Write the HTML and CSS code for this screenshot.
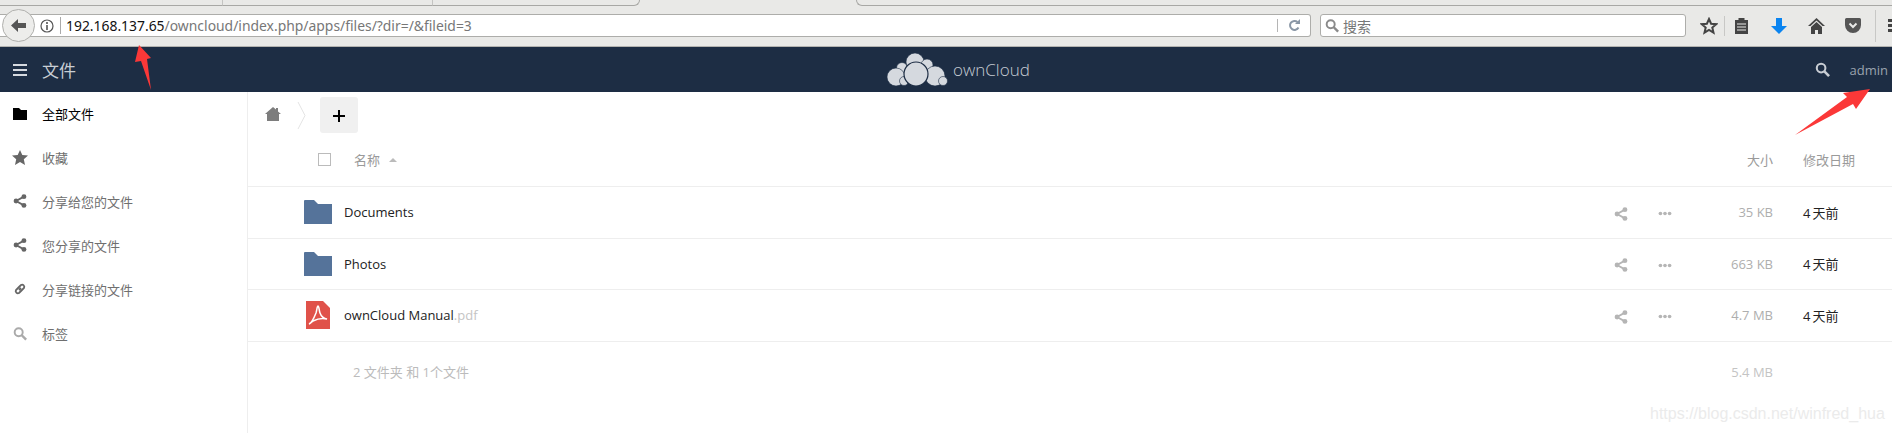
FILE: index.html
```html
<!DOCTYPE html>
<html lang="zh-CN">
<head>
    <meta charset="UTF-8">
    <title>文件 - ownCloud</title>
    <link rel="stylesheet" href="styles.css">
</head>
<body>

    <svg class="defs" width="0" height="0">
        <symbol id="i-share" viewBox="0 0 16 16">
            <path d="M12.5 3 3.5 8l9 5" fill="none" stroke="currentColor" stroke-width="2"/>
            <circle cx="12.5" cy="3" r="2.8" fill="currentColor"/>
            <circle cx="3.5" cy="8" r="2.8" fill="currentColor"/>
            <circle cx="12.5" cy="13" r="2.8" fill="currentColor"/>
        </symbol>
        <symbol id="i-dots" viewBox="0 0 16 6">
            <circle cx="2.5" cy="3" r="2.2" fill="currentColor"/>
            <circle cx="8" cy="3" r="2.2" fill="currentColor"/>
            <circle cx="13.5" cy="3" r="2.2" fill="currentColor"/>
        </symbol>
        <symbol id="i-folder" viewBox="0 0 28 24">
            <path d="M0 1a1 1 0 0 1 1-1h9l4 4h14v20H0z" fill="#55739a"/>
        </symbol>
        <symbol id="i-search" viewBox="0 0 16 16">
            <circle cx="6.5" cy="6.5" r="4.6" fill="none" stroke="currentColor" stroke-width="2.2"/>
            <path d="m10 10 5 5" stroke="currentColor" stroke-width="2.8"/>
        </symbol>
    </svg>

    <div class="tabstrip">
        <div class="tab tab-first"></div>
        <div class="tab tab-second"></div>
        <div class="tab tab-third"></div>
        <div class="tab-active"></div>
        <div class="tab tab-rest"></div>
    </div>

    <div class="toolbar">
        <div class="urlbar">
            <div class="backbtn">
                <svg width="15" height="13" viewBox="0 0 15 13"><path d="M7 0 0 6.500 7 13V9h8V4H7z" fill="#555"/></svg>
            </div>
            <svg class="info" width="14" height="14" viewBox="0 0 14 14">
                <circle cx="7" cy="7" r="6" fill="none" stroke="#555" stroke-width="1.2"/>
                <path d="M7 6v5M7 3v2" stroke="#555" stroke-width="1.6"/>
            </svg>
            <span class="url"><b>192.168.137.65</b>/owncloud/index.php/apps/files/?dir=/&amp;fileid=3</span>
            <svg class="reload" width="13" height="13" viewBox="0 0 13 13">
                <path d="M10.5 8.5A4.5 4.5 0 1 1 9.5 3" fill="none" stroke="#8a97a6" stroke-width="2"/>
                <path d="M7 5h5V0z" fill="#8a97a6"/>
            </svg>
        </div>
        <div class="searchbar">
            <svg class="searchbar-icon" width="14" height="15"><use href="#i-search"/></svg>
            <span>搜索</span>
        </div>
        <div class="tools">
            <svg class="tool-star" width="18" height="18" viewBox="0 0 18 18">
                <path d="m9 2 2.100 4.700 5.100.5-3.900 3.400 1.200 5L9 13l-4.500 2.600 1.200-5-3.900-3.400 5.100-.5z" fill="none" stroke="#444" stroke-width="2"/>
            </svg>
            <i class="tool-sep"></i>
            <svg class="tool-clip" width="15" height="17" viewBox="0 0 15 17">
                <path d="M1 3h3.500V1h6v2H14v14H1z" fill="#444"/>
                <path d="M3 7h9M3 10h9M3 13h9" stroke="#e9e9e7" stroke-width="1.2"/>
            </svg>
            <svg class="tool-down" width="16" height="16" viewBox="0 0 16 16">
                <path d="M5 0h6v8h5l-8 8-8-8h5z" fill="#0a84f0"/>
            </svg>
            <svg class="tool-home" width="17" height="16" viewBox="0 0 17 16">
                <path d="M8.500 0 0 8h2.500L8.500 2.500 14.500 8H17z" fill="#444"/>
                <path d="M8.500 4 3 9v7h4v-4h3v4h4V9z" fill="#444"/>
            </svg>
            <svg class="tool-pocket" width="16" height="15" viewBox="0 0 16 15">
                <path d="M0 1.500A1.500 1.500 0 0 1 1.500 0h13A1.500 1.500 0 0 1 16 1.500V7a8 8 0 0 1-16 0z" fill="#555"/>
                <path d="m4.500 5.500 3.500 3.500 3.500-3.500" fill="none" stroke="#e9e9e7" stroke-width="2"/>
            </svg>
            <i class="tool-sep tool-sep-last"></i>
            <div class="tool-menu"><i></i><i></i><i></i></div>
        </div>
    </div>

    <header class="topbar">
        <div class="topbar-left">
            <div class="burger"><i></i><i></i><i></i></div>
            <span class="app-name">文件</span>
        </div>
        <div class="logo">
            <svg width="62" height="33" viewBox="887 53 62 33">
                <g fill="#d5d9df" stroke="#1d2d44" stroke-width=".6">
                    <circle cx="902" cy="68" r="5.500"/>
                    <circle cx="915" cy="62" r="9"/>
                    <circle cx="927" cy="65" r="6"/>
                    <circle cx="896" cy="77" r="9"/>
                    <circle cx="935" cy="76" r="10"/>
                    <circle cx="943" cy="81" r="4.500"/>
                    <circle cx="904" cy="81" r="4.500"/>
                    <circle cx="916" cy="74" r="12" stroke-width="1.200"/>
                </g>
            </svg>
            <span>ownCloud</span>
        </div>
        <div class="topbar-right">
            <svg class="top-search" width="15" height="15"><use href="#i-search"/></svg>
            <span class="user">admin</span>
        </div>
    </header>

    <div class="content">
        <nav class="sidebar">
            <a class="nav-item active">
                <svg class="nav-icon" width="14" height="12" viewBox="0 0 14 12"><path d="M0 0h6l2 2h6v10H0z" fill="#000"/></svg>
                全部文件
            </a>
            <a class="nav-item">
                <svg class="nav-icon nav-star" width="16" height="15" viewBox="0 0 16 15"><path d="m8 0 2.300 5 5.700.6-4.200 3.700 1.200 5.700L8 12l-5 3 1.200-5.700L0 5.600 5.700 5z" fill="#666"/></svg>
                收藏
            </a>
            <a class="nav-item">
                <svg class="nav-icon" width="14" height="14"><use href="#i-share"/></svg>
                分享给您的文件
            </a>
            <a class="nav-item">
                <svg class="nav-icon" width="14" height="14"><use href="#i-share"/></svg>
                您分享的文件
            </a>
            <a class="nav-item">
                <svg class="nav-icon" width="14" height="14" viewBox="0 0 14 14">
                    <path d="M6 8 8 6M5.500 5.500 8 3a2.200 2.200 0 0 1 3 3L8.500 8.500M8.500 8.500 6 11a2.200 2.200 0 0 1-3-3l2.500-2.500" fill="none" stroke="#666" stroke-width="1.800"/>
                </svg>
                分享链接的文件
            </a>
            <a class="nav-item nav-tags">
                <svg class="nav-icon" width="14" height="15"><use href="#i-search"/></svg>
                标签
            </a>
        </nav>

        <main class="files">
            <div class="controls">
                <svg class="crumb-home" width="16" height="14" viewBox="0 0 16 14">
                    <path d="M8 0 0 7h2v7h12V7h2l-3-2.600V1h-2v1.600z" fill="#7d7d7d"/>
                </svg>
                <svg class="crumb-sep" width="9" height="27" viewBox="0 0 9 27">
                    <path d="m1 0 7 13.500L1 27" fill="none" stroke="#e4e4e4"/>
                </svg>
                <button class="add-btn">
                    <svg width="14" height="14" viewBox="0 0 14 14"><path d="M7 1v12M1 7h12" stroke="#000" stroke-width="2"/></svg>
                </button>
            </div>

            <div class="file-head">
                <span class="check"></span>
                <span class="head-name">名称</span>
                <i class="sort-arrow"></i>
                <span class="head-size">大小</span>
                <span class="head-date">修改日期</span>
            </div>

            <div class="file-row">
                <svg class="file-icon" width="28" height="24"><use href="#i-folder"/></svg>
                <span class="file-name">Documents</span>
                <svg class="act-share" width="14" height="14"><use href="#i-share"/></svg>
                <svg class="act-dots" width="14" height="5"><use href="#i-dots"/></svg>
                <span class="file-size">35 KB</span>
                <span class="file-date">4&thinsp;天前</span>
            </div>
            <div class="file-row">
                <svg class="file-icon" width="28" height="24"><use href="#i-folder"/></svg>
                <span class="file-name">Photos</span>
                <svg class="act-share" width="14" height="14"><use href="#i-share"/></svg>
                <svg class="act-dots" width="14" height="5"><use href="#i-dots"/></svg>
                <span class="file-size">663 KB</span>
                <span class="file-date">4&thinsp;天前</span>
            </div>
            <div class="file-row">
                <svg class="file-icon pdf-icon" width="24" height="28" viewBox="0 0 24 28">
                    <path d="M0 0h17l7 7v21H0z" fill="#e0524a"/>
                    <path d="M3 23c3-1 5-6 7-11 1-3 1-7 2-7s1 4 2 7c1 3 4 6 7 6-4-1-10 0-14 2-2 1-3 3-4 3z" fill="none" stroke="#fff" stroke-width="1.500"/>
                </svg>
                <span class="file-name">ownCloud Manual<span class="file-ext">.pdf</span></span>
                <svg class="act-share" width="14" height="14"><use href="#i-share"/></svg>
                <svg class="act-dots" width="14" height="5"><use href="#i-dots"/></svg>
                <span class="file-size">4.7 MB</span>
                <span class="file-date">4&thinsp;天前</span>
            </div>

            <div class="file-summary">
                <span class="summary-text">2 文件夹 和 1个文件</span>
                <span class="file-size">5.4 MB</span>
            </div>
        </main>
    </div>

    <span class="watermark">https://blog.csdn.net/winfred_hua</span>

    <svg class="arrows" width="1892" height="433">
        <polygon points="139,45 151,58 147,59 151,90 141,61 135,62" fill="#fb3838"/>
        <polygon points="1870,89 1856,109 1853,104 1795,135 1847,97 1843,93" fill="#fb3838"/>
    </svg>

</body>
</html>
```

FILE: styles.css
```css
* {
    box-sizing: border-box;
}

html, body {
    margin: 0;
    padding: 0;
}

body {
    position: relative;
    display: flex;
    flex-direction: column;
    height: 433px;
    overflow: hidden;
    background: #fff;
    font-family: 'Open Sans', 'Noto Sans CJK SC', sans-serif;
    font-size: 13px;
    color: #555;
}

.defs {
    position: absolute;
}

svg {
    display: block;
    flex: none;
}

/* browser chrome */
.tabstrip {
    display: flex;
    height: 6px;
    background: #e9e9e7;
}

.tab {
    border-bottom: 1px solid #a8a8a5;
    border-right: 1px solid #c4c4c2;
}

.tab-first {
    width: 223px;
}

.tab-second {
    width: 210px;
}

.tab-third {
    width: 207px;
    border-bottom-right-radius: 6px;
    border-right: 1px solid #a8a8a5;
}

.tab-active {
    width: 216px;
}

.tab-rest {
    flex: 1;
    border-right: none;
    border-left: 1px solid #a8a8a5;
    border-bottom-left-radius: 6px;
}

.toolbar {
    display: flex;
    align-items: center;
    height: 41px;
    padding-bottom: 1px;
    background: #e9e9e7;
    border-bottom: 1px solid #b3b3b0;
}

.urlbar {
    display: flex;
    flex: none;
    align-items: center;
    width: 1311px;
    height: 23px;
    background: #fff;
    border: 1px solid #adadaa;
    border-left: none;
    border-radius: 0 3px 3px 0;
}

.backbtn {
    display: flex;
    flex: none;
    align-items: center;
    justify-content: center;
    width: 33px;
    height: 33px;
    margin-left: 2px;
    background: #ededeb;
    border: 1px solid #b0b0ad;
    border-radius: 50%;
}

.info {
    margin-left: 5px;
}

.url {
    flex: 1;
    margin-left: 6px;
    padding-left: 5px;
    border-left: 1px solid #aaa;
    font-family: 'Noto Sans', sans-serif;
    font-size: 13.900px;
    line-height: 17px;
    color: #777;
    white-space: nowrap;
}

.url b {
    font-weight: normal;
    color: #111;
}

.reload {
    box-sizing: content-box;
    padding: 0 9px 0 10px;
    border-left: 1px solid #b5b5b5;
}

.searchbar {
    display: flex;
    flex: none;
    align-items: center;
    width: 366px;
    height: 23px;
    margin-left: 9px;
    background: #fff;
    border: 1px solid #adadaa;
    border-radius: 3px;
    font-size: 14px;
    color: #777;
}

.searchbar-icon {
    margin: 0 4px 0 4px;
    color: #8a8a8a;
}

.tools {
    display: flex;
    flex: none;
    align-items: center;
}

.tool-star {
    margin-left: 14px;
}

.tool-sep {
    width: 1px;
    height: 20px;
    margin-left: 6px;
    background: #c8c8c6;
}

.tool-clip {
    margin-left: 9px;
}

.tool-down {
    margin-left: 22px;
}

.tool-home {
    margin-left: 21px;
}

.tool-pocket {
    margin-left: 20px;
}

.tool-sep-last {
    height: 32px;
    margin-left: 14px;
}

.tool-menu {
    display: flex;
    flex-direction: column;
    gap: 2px;
    margin-left: 12px;
}

.tool-menu i {
    display: block;
    width: 4px;
    height: 3px;
    background: #444;
}

/* owncloud header */
.topbar {
    display: flex;
    align-items: center;
    height: 45px;
    background: #1d2d44;
    color: #d5d9df;
}

.topbar-left {
    display: flex;
    flex: none;
    align-items: center;
    width: 887px;
    padding-left: 13px;
}

.burger {
    display: flex;
    flex-direction: column;
    gap: 3px;
}

.burger i {
    display: block;
    width: 14px;
    height: 2px;
    background: #d5d9df;
}

.app-name {
    margin-left: 15px;
    font-size: 17px;
    color: #c8cdd4;
}

.logo {
    display: flex;
    align-items: center;
    gap: 4px;
    font-size: 17px;
    font-weight: 300;
    color: #c5cbd3;
}

.topbar-right {
    display: flex;
    align-items: center;
    margin-left: auto;
    padding-right: 4px;
}

.top-search {
    color: #c8cdd4;
}

.user {
    margin-left: 20px;
    color: #9aa3ae;
}

/* sidebar */
.content {
    display: flex;
    flex: 1;
    min-height: 0;
}

.sidebar {
    flex: none;
    width: 248px;
    border-right: 1px solid #eee;
}

.nav-item {
    display: flex;
    align-items: center;
    height: 44px;
    padding-left: 13px;
    color: #6f6f6f;
}

.nav-item:first-child {
    height: 43px;
}

.nav-item.active {
    color: #000;
}

.nav-icon {
    margin-right: 15px;
    color: #666;
}

.nav-star {
    margin-left: -1px;
    margin-right: 14px;
}

.nav-tags .nav-icon {
    color: #aaa;
}

/* file list */
.files {
    flex: 1;
    min-width: 0;
}

.controls {
    display: flex;
    align-items: center;
    height: 41px;
    padding: 5px 0 0 17px;
}

.crumb-home {
    margin-bottom: 3px;
}

.crumb-sep {
    margin-left: 16px;
}

.add-btn {
    display: flex;
    align-items: center;
    justify-content: center;
    width: 38px;
    height: 36px;
    margin-left: 14px;
    padding: 2px 0 0;
    background: #f0f0f0;
    border: none;
    border-radius: 3px;
}

.file-head {
    display: flex;
    align-items: center;
    height: 54px;
    border-bottom: 1px solid #eee;
    color: #9a9a9a;
}

.check {
    width: 13px;
    height: 13px;
    margin-left: 70px;
    border: 1px solid #bbb;
}

.head-name {
    margin-left: 23px;
}

.sort-arrow {
    width: 0;
    height: 0;
    margin-left: 9px;
    border: 4px solid transparent;
    border-top: none;
    border-bottom-color: #bbb;
}

.head-size {
    flex: 1;
    text-align: right;
}

.head-date {
    width: 119px;
    padding-left: 30px;
}

.file-row {
    display: flex;
    align-items: center;
    height: 51.500px;
    padding-left: 56px;
    border-bottom: 1px solid #eee;
}

.file-icon {
    margin-right: 12px;
}

.pdf-icon {
    margin-left: 2px;
    margin-right: 14px;
}

.file-name {
    flex: 1;
    color: #222;
}

.file-ext {
    color: #c4c4c4;
}

.act-share {
    margin-top: 3px;
    color: #b5b5b5;
}

.act-dots {
    margin-top: 3px;
    margin-left: 30px;
    color: #b5b5b5;
}

.file-size {
    width: 101px;
    text-align: right;
    color: #aeaeae;
}

.file-date {
    width: 119px;
    padding-left: 30px;
    color: #222;
}

.file-summary {
    display: flex;
    align-items: center;
    height: 60px;
    padding-left: 105px;
    color: #bbb;
}

.summary-text {
    flex: 1;
}

.file-summary .file-size {
    width: auto;
    margin-right: 119px;
    color: #c4c4c4;
}

/* overlays */
.watermark {
    position: absolute;
    left: 1650px;
    top: 405px;
    font-family: 'Liberation Sans', sans-serif;
    font-size: 16px;
    color: #ebebeb;
}

.arrows {
    position: absolute;
    left: 0;
    top: 0;
    pointer-events: none;
}
```
